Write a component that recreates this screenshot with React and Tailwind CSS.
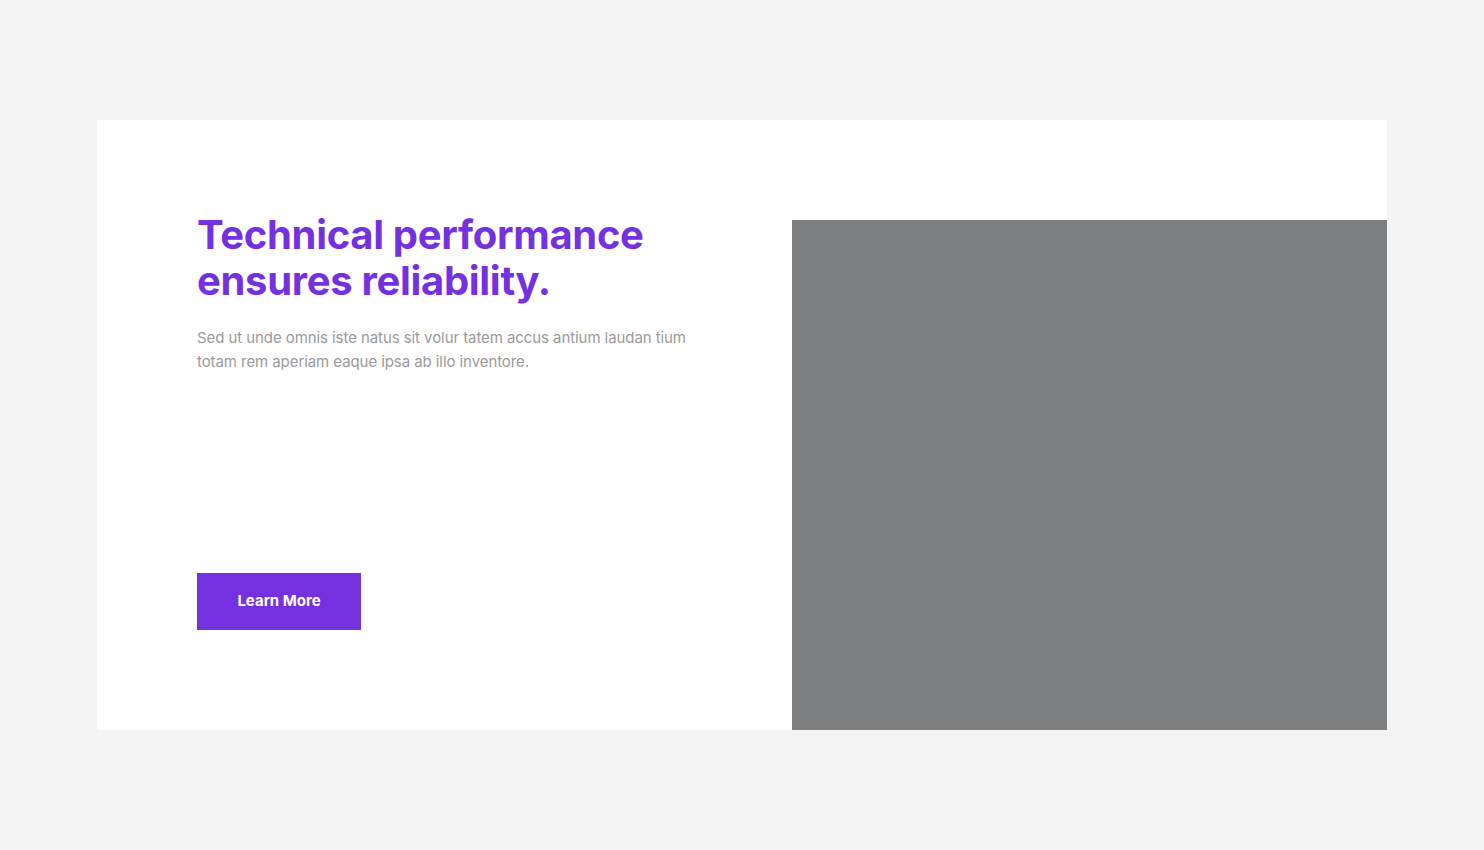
import React from "react";

export default function App() {
  return (
    <div
      className="min-h-[850px] w-full bg-[#f4f4f4] pt-[120px]"
      style={{ fontFamily: "Inter, 'Noto Sans', sans-serif" }}
    >
      <section className="mx-auto flex h-[610px] w-[1290px] bg-white">
        <div className="flex w-[695px] flex-col justify-between pb-[100px] pl-[100px] pt-[92px]">
          <div>
            <h2 className="text-[40px] font-bold leading-[46px] tracking-[-0.008em] text-[#7431e0]">
              Technical performance
              <br />
              ensures reliability.
            </h2>
            <p className="mt-[22px] w-[495px] text-[15px] leading-[24px] tracking-[-0.005em] text-[#9a9a9a]">
              Sed ut unde omnis iste natus sit volur tatem accus antium laudan tium totam rem
              aperiam eaque ipsa ab illo inventore.
            </p>
          </div>
          <button className="flex h-[57px] w-[164px] items-center justify-center bg-[#7531e0] text-[15px] font-bold text-white">
            Learn More
          </button>
        </div>
        <div className="mt-[100px] h-[510px] w-[595px] bg-[#7d7e80]" />
      </section>
    </div>
  );
}
